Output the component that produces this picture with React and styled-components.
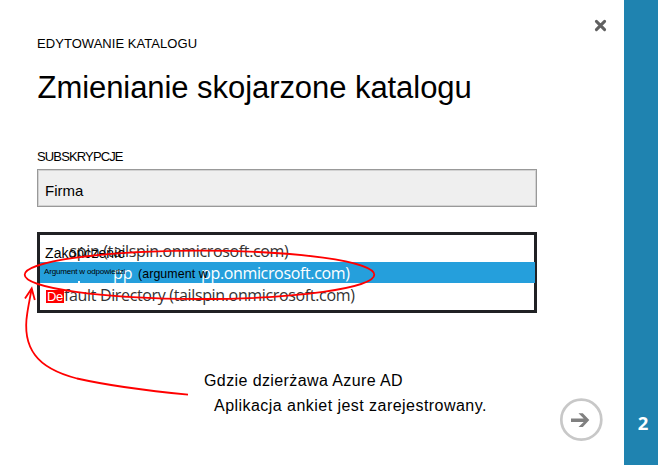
import React from 'react';
import styled, { createGlobalStyle } from 'styled-components';

const GlobalStyle = createGlobalStyle`
  * { box-sizing: border-box; }
  body { margin: 0; background: #fff; }
`;

const sans = '"Liberation Sans", Arial, sans-serif';
const humanist = '"Open Sans", "Noto Sans", sans-serif';

const Page = styled.div`
  position: relative;
  display: flex;
  width: 658px;
  height: 465px;
  overflow: hidden;
  background: #fff;
  color: #000;
  font-family: ${sans};
  white-space: nowrap;
`;

const Dialog = styled.main`
  flex: 1;
  display: flex;
  padding: 0 20px 0 37px;
`;

const Content = styled.div`
  width: 500px;
  padding-top: 36px;
`;

const Actions = styled.div`
  flex: 1;
  display: flex;
  flex-direction: column;
  align-items: flex-end;
  justify-content: space-between;
  padding: 18px 0 22px;
`;

const IconButton = styled.button`
  display: block;
  border: 0;
  padding: 0;
  margin-right: ${(p) => p.$inset || 0}px;
  background: none;
  line-height: 0;
`;

const StepBar = styled.aside`
  width: 34px;
  display: flex;
  flex-direction: column;
  justify-content: flex-end;
  align-items: center;
  padding: 0 0 30px 4px;
  background: #1f83b0;
  color: #fff;
  font: bold 18.5px/24px ${humanist};
`;

const Eyebrow = styled.div`
  font-size: 13px;
  line-height: 15px;
  letter-spacing: 0.05px;
`;

const Title = styled.h1`
  margin: 21px 0 0 0.5px;
  font-size: 31px;
  font-weight: 400;
  line-height: 32px;
  letter-spacing: -0.06px;
`;

const Label = styled.label`
  display: block;
  margin-top: 45px;
  font-size: 13px;
  line-height: 15px;
  letter-spacing: -0.86px;
`;

const Field = styled.div`
  height: 38px;
  margin-top: 5px;
  padding-left: 7px;
  border: 1px solid #999;
  box-shadow: inset 0 0 0 1px #d2d2d2;
  background: #efefef;
  font-size: 15px;
  line-height: 42px;
`;

const Options = styled.div`
  height: 81px;
  margin-top: 25px;
  border: 3px solid #202124;
`;

const Option = styled.div`
  position: relative;
  height: ${(p) => (p.$selected ? 21 : 27)}px;
  margin-right: ${(p) => (p.$selected ? -1 : 0)}px;
  padding: ${(p) => p.$top || 0}px 0 0 ${(p) => p.$left}px;
  background: ${(p) => (p.$selected ? '#259fdc' : 'transparent')};
  color: ${(p) => (p.$selected ? '#fff' : '#333')};
  font: 16px/${(p) => p.$line}px ${humanist};
  letter-spacing: -0.35px;
`;

const Overprint = styled.span`
  position: absolute;
  left: ${(p) => p.$x}px;
  top: ${(p) => p.$y}px;
  color: ${(p) => p.$color || '#000'};
  background: ${(p) => p.$fill || 'transparent'};
  padding: 0 ${(p) => p.$pad || 0}px;
  font: ${(p) => p.$size}px/${(p) => p.$line}px ${(p) => p.$font || sans};
  letter-spacing: ${(p) => p.$spacing || 0}px;
`;

const Dot = styled.i`
  position: absolute;
  left: 38px;
  top: 19px;
  width: 2px;
  height: 2px;
  background: #fff;
`;

const Note = styled.p`
  margin: 55px 0 0 167px;
  font-size: 16px;
  line-height: 25px;
`;

const NoteLine = styled.span`
  display: block;
  margin-left: ${(p) => p.$indent || 0}px;
  letter-spacing: ${(p) => p.$spacing}px;
`;

const Annotation = styled.svg`
  position: absolute;
  inset: 0;
  pointer-events: none;
`;

export default function App() {
  return (
    <Page>
      <GlobalStyle />
      <Dialog>
        <Content>
          <Eyebrow>EDYTOWANIE KATALOGU</Eyebrow>
          <Title>Zmienianie skojarzone katalogu</Title>
          <Label>SUBSKRYPCJE</Label>
          <Field>Firma</Field>
          <Options>
            <Option $left={29.5} $top={5} $line={22}>
              spin (tailspin.onmicrosoft.com)
              <Overprint $x={5} $y={8} $size={14} $line={20} $spacing={0.08}>Zakończenie</Overprint>
            </Option>
            <Option $selected $left={161} $top={1} $line={21}>
              pp.onmicrosoft.com)
              <Overprint $x={73} $y={1} $size={16} $line={21} $font={humanist} $color="#fff">pp</Overprint>
              <Overprint $x={4} $y={5} $size={8} $line={10} $spacing={-0.18}>Argument w odpowiedzi</Overprint>
              <Overprint $x={98} $y={2} $size={12.4} $line={20} $spacing={0.08}>(argument w</Overprint>
              <Dot />
            </Option>
            <Option $left={24} $line={24}>
              fault Directory (tailspin.onmicrosoft.com)
              <Overprint $x={6} $y={7} $size={13} $line={13} $pad={1} $spacing={-0.3} $fill="#f00" $color="#fff">De</Overprint>
            </Option>
          </Options>
          <Note>
            <NoteLine $spacing={0.4}>Gdzie dzierżawa Azure AD</NoteLine>
            <NoteLine $indent={10} $spacing={0.46}>Aplikacja ankiet jest zarejestrowany.</NoteLine>
          </Note>
        </Content>
        <Actions>
          <IconButton aria-label="Zamknij" $inset={-4}>
            <svg width="15" height="15" viewBox="0 0 15 15">
              <path d="M3.4 3.4 11.6 11.6M11.6 3.4 3.4 11.6" stroke="#606060" strokeWidth="3" strokeLinecap="round" />
            </svg>
          </IconButton>
          <IconButton aria-label="Dalej">
            <svg width="46" height="46" viewBox="0 0 46 46">
              <circle cx="23.3" cy="22.7" r="20" fill="none" stroke="#c8c8c8" strokeWidth="2.7" />
              <path d="M13 21.4H25.7L20.5 16.2H24.8L31.3 23.1 24.8 30H20.5L25.7 24.9H13Z" fill="#808080" />
            </svg>
          </IconButton>
        </Actions>
      </Dialog>
      <StepBar>2</StepBar>
      <Annotation width="658" height="465" viewBox="0 0 658 465" fill="none" stroke="#f00" strokeWidth="1.8">
        <ellipse cx="199.5" cy="274.8" rx="174.8" ry="24.2" />
        <path d="M188 394.6C150 391 115 387 77 378.5C56 373 43 366 35 355C26 343 25 327 27.3 313C28.5 305 30 298 31.6 289" />
        <path d="M25 298.5 31.7 288.5 34.8 300" />
      </Annotation>
    </Page>
  );
}
